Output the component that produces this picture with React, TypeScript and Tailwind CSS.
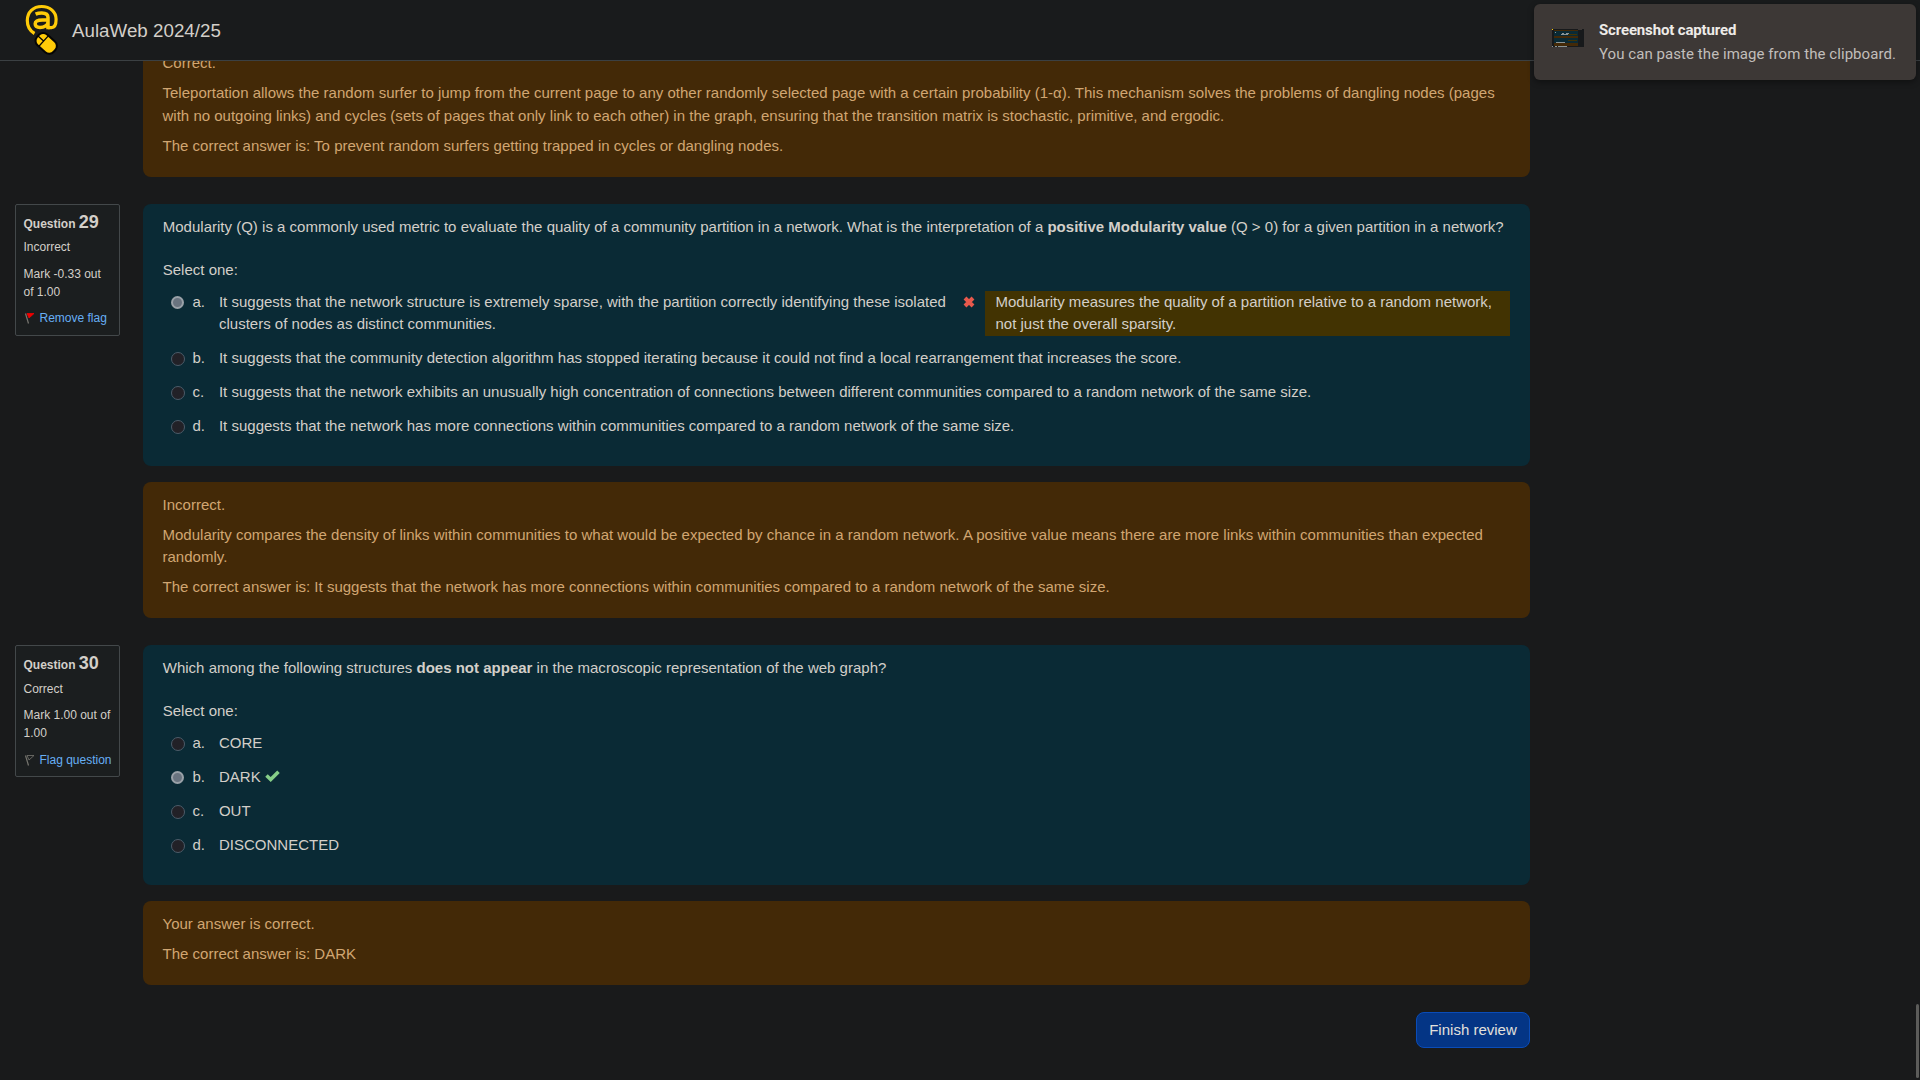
import React from "react";

function AulaLogo() {
  return (
    <svg className="ml-6 mt-1 h-[52px] w-9 shrink-0" viewBox="0 0 36 52" fill="none">
      <path d="M10.5 29.500C5.500 26.600 3.300 22 3.300 16.500C3.300 8 9.200 2.500 17.700 2.500C26 2.500 32.100 7.800 32.100 15.300C32.100 20.500 30.500 23.600 27.500 23.600H24" stroke="#ffcb08" strokeWidth="3.200" />
      <path d="M24 25.300V13.500C24 10.200 21.700 9 17.800 9C15.200 9 13.300 9.400 11.600 10.200M24 15.900H18.500C13.200 15.900 11.200 17.300 11.200 19.800C11.200 22.300 13 23.500 16 23.500C20 23.500 24 21.500 24 18" stroke="#ffcb08" strokeWidth="3.500" />
      <g transform="translate(22.200 39.400) rotate(-48)">
        <rect x="-7.200" y="-11.200" width="14.400" height="22.400" rx="6" fill="#ffcb08" stroke="#050505" strokeWidth="2" />
        <path d="M-7 -3.500H7M0 -11V-3.500" stroke="#050505" strokeWidth="1.300" />
      </g>
    </svg>
  );
}

function Flag({ on }: { on: boolean }) {
  return (
    <svg className="mr-1 inline-block h-3 w-3 align-[-2px]" viewBox="0 0 12 12" fill="none">
      <path d="M1.500 1.500L4.500 11.500" stroke="#777670" strokeWidth="1.200" />
      <path d="M3 1.500H10L5 6Z" fill={on ? "#f00000" : "none"} stroke={on ? "#f00000" : "#777670"} strokeWidth=".8" />
    </svg>
  );
}

function Info({ n, state, mark, on, link }: { n: number; state: string; mark: string; on: boolean; link: string }) {
  return (
    <aside className="h-[132px] w-[105px] shrink-0 rounded-[2px] border border-[#43484a] bg-[#1b1e1f] px-[7.500px] pt-[6px] text-[12px] leading-[18px] tracking-normal">
      <h3 className="mb-[2px] h-[25px] font-bold leading-[22px]">
        Question <span className="text-[18px]">{n}</span>
      </h3>
      <div className={on ? "mb-[9px]" : "mb-[8px] pt-[1px]"}>{state}</div>
      <div className={on ? "mb-[8px] whitespace-pre" : "mb-[9px] whitespace-pre"}>{mark}</div>
      <div className="whitespace-nowrap text-[#67aff5]">
        <Flag on={on} />
        {link}
      </div>
    </aside>
  );
}

function Radio({ checked }: { checked?: boolean }) {
  return checked ? (
    <span className="ml-[8.500px] mt-[5px] h-[13px] w-[13px] shrink-0 rounded-full border-[2.500px] border-[#9aa1a8] bg-[#69737f]" />
  ) : (
    <span className="ml-[8px] mt-[5px] h-[14px] w-[14px] shrink-0 rounded-full border border-[#4c5c69] bg-[#222127]" />
  );
}

function Answer({ letter, checked, children }: { letter: string; checked?: boolean; children: React.ReactNode }) {
  return (
    <div className="mb-[11.500px] flex">
      <div className="flex w-[29.700px] shrink-0">
        <Radio checked={checked} />
      </div>
      <span className="w-[26.500px] shrink-0">{letter}.</span>
      {children}
    </div>
  );
}

function Cross() {
  return (
    <svg className="ml-4 mr-[10px] mt-[5px] h-[12px] w-[12px] shrink-0" viewBox="0 0 12 12">
      <path d="M2 2L10 10M10 2L2 10" stroke="#e8594c" strokeWidth="4" />
    </svg>
  );
}

function Tick() {
  return (
    <svg className="ml-[4.500px] mt-[4.500px] h-[12px] w-[15px] shrink-0" viewBox="0 0 15 12">
      <path d="M1.500 5.500L5.700 9.500L13.500 1.700" fill="none" stroke="#86ce88" strokeWidth="3.600" />
    </svg>
  );
}

function Outcome({ className, children }: { className: string; children: React.ReactNode }) {
  return (
    <div className={"flex flex-col gap-[7.500px] rounded-lg bg-[#432907] px-[19.500px] text-[#d1a672] " + className}>
      {children}
    </div>
  );
}

export default function App() {
  return (
    <div className="relative flex h-[1080px] w-[1920px] flex-col overflow-hidden bg-[#191a1b] font-['Liberation_Sans',sans-serif] text-[15px] leading-[22.500px] tracking-[0.007px] text-[#d3cfc9]">
      <header className="z-10 flex h-[61px] shrink-0 border-b border-[#3b4043] bg-[#191b1c]">
        <AulaLogo />
        <span className="ml-3 mt-[16.500px] text-[18.750px] leading-[28px]">AulaWeb 2024/25</span>
      </header>

      <main className="-mt-[21px] flex w-[1530px] flex-col pl-[15px]">
        <section className="ml-32">
          <Outcome className="h-[137px] pt-[12px]">
            <p>Correct.</p>
            <p>
              Teleportation allows the random surfer to jump from the current page to any other randomly selected page with a certain probability (1-α). This mechanism solves the problems of dangling nodes (pages with no outgoing links) and cycles (sets of pages that only link to each other) in the graph, ensuring that the transition matrix is stochastic, primitive, and ergodic.
            </p>
            <p>The correct answer is: To prevent random surfers getting trapped in cycles or dangling nodes.</p>
          </Outcome>
        </section>

        <section className="mt-[27px] flex gap-[23px]">
          <Info n={29} state="Incorrect" mark={"Mark -0.33 out\nof 1.00"} on link="Remove flag" />
          <div className="w-[1387px]">
            <div className="h-[262px] rounded-lg bg-[#0a2a35] px-[19.750px] pt-[12px]">
              <p className="whitespace-nowrap">
                Modularity (Q) is a commonly used metric to evaluate the quality of a community partition in a network. What is the interpretation of a <b>positive Modularity value</b> (Q &gt; 0) for a given partition in a network?
              </p>
              <p className="mb-[9px] mt-[20.500px]">Select one:</p>
              <Answer letter="a" checked>
                <span className="w-[728px] shrink-0">
                  It suggests that the network structure is extremely sparse, with the partition correctly identifying these isolated clusters of nodes as distinct communities.
                </span>
                <Cross />
                <span className="flex-1 bg-[#423302] pl-[10.500px]">
                  Modularity measures the quality of a partition relative to a random network, not just the overall sparsity.
                </span>
              </Answer>
              <Answer letter="b">It suggests that the community detection algorithm has stopped iterating because it could not find a local rearrangement that increases the score.</Answer>
              <Answer letter="c">It suggests that the network exhibits an unusually high concentration of connections between different communities compared to a random network of the same size.</Answer>
              <Answer letter="d">It suggests that the network has more connections within communities compared to a random network of the same size.</Answer>
            </div>
            <Outcome className="mt-4 h-[136px] pt-[11.500px]">
              <p>Incorrect.</p>
              <p>
                Modularity compares the density of links within communities to what would be expected by chance in a random network. A positive value means there are more links within communities than expected randomly.
              </p>
              <p>The correct answer is: It suggests that the network has more connections within communities compared to a random network of the same size.</p>
            </Outcome>
          </div>
        </section>

        <section className="mt-[27px] flex gap-[23px]">
          <Info n={30} state="Correct" mark={"Mark 1.00 out of\n1.00"} on={false} link="Flag question" />
          <div className="w-[1387px]">
            <div className="h-[240px] rounded-lg bg-[#0a2a35] px-[19.750px] pt-[12px]">
              <p>
                Which among the following structures <b>does not appear</b> in the macroscopic representation of the web graph?
              </p>
              <p className="mb-[9px] mt-[20.500px]">Select one:</p>
              <Answer letter="a">CORE</Answer>
              <Answer letter="b" checked>
                DARK
                <Tick />
              </Answer>
              <Answer letter="c">OUT</Answer>
              <Answer letter="d">DISCONNECTED</Answer>
            </div>
            <Outcome className="mt-4 h-[84px] pt-[11.500px]">
              <p>Your answer is correct.</p>
              <p>The correct answer is: DARK</p>
            </Outcome>
          </div>
        </section>

        <button className="mt-[27px] h-[36px] w-[114px] self-end rounded-lg border border-[#0a4cb8] bg-[#043585] text-[#e2e0dc]">Finish review</button>
      </main>

      <div className="absolute bottom-[2px] right-px h-[74px] w-[3px] rounded-full bg-[#5c5c5a]" />

      <div className="absolute left-[1534px] top-[4px] z-20 flex h-[76px] w-[382px] rounded-md bg-[#3d3836] pl-[18px] shadow-[0_2px_6px_rgba(0,0,0,0.4)]">
        <svg className="mt-[25px] h-[18px] w-8 shrink-0" viewBox="0 0 32 18" shapeRendering="crispEdges">
          <path fill="#17191b" d="M0 0H32V18H0Z" />
          <path fill="#432907" d="M2 1H26V2H2ZM2 7H26V9H2ZM2 14H26V17H2Z" />
          <path fill="#0a2a35" d="M2 2H26V7H2ZM2 9H26V14H2Z" />
          <path fill="#423302" d="M16 5H25V6H16ZM16 11H25V12H16Z" />
          <path fill="#fc0" d="M0 0H1V1H0Z" />
          <path fill="#8a9496" d="M3 3H4V4H3ZM10 4H12V5H10ZM14 4H17V5H14ZM9 5H16V6H9ZM4 13H13V14H4ZM3 17H5V18H3ZM6 17H15V18H6ZM0 17H1V18H0Z" />
          <path fill="#3d3836" d="M26 0H30V1H26Z" />
        </svg>
        <div className="ml-[15px] whitespace-nowrap font-['Roboto',sans-serif] leading-6">
          <p className="mt-[14px] text-[15px] font-bold tracking-[-0.15px] text-[#eeebe8]">Screenshot captured</p>
          <p className="text-[15px] tracking-[0.06px] text-[#c1bebb]">You can paste the image from the clipboard.</p>
        </div>
      </div>
    </div>
  );
}
